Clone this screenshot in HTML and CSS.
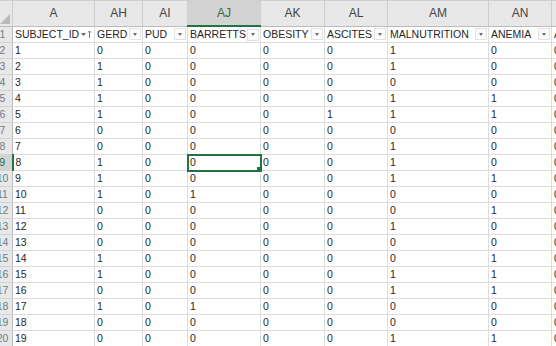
FILE: index.html
```html
<!DOCTYPE html>
<html lang="en">
<head>
    <meta charset="UTF-8">
    <meta name="viewport" content="width=device-width, initial-scale=1.0">
    <title>Sheet1</title>
    <link rel="stylesheet" href="styles.css">
</head>
<body>
    <table class="sheet">
        <colgroup>
            <col class="c-rn"><col class="c-a"><col class="c-ah"><col class="c-ai"><col class="c-aj">
            <col class="c-ak"><col class="c-al"><col class="c-am"><col class="c-an"><col class="c-ao">
        </colgroup>
        <thead>
            <tr class="letters">
                <th class="corner"><span class="tri"></span></th>
                <th>A</th><th>AH</th><th>AI</th><th class="sel">AJ</th><th>AK</th><th>AL</th><th>AM</th><th>AN</th><th>AO</th>
            </tr>
        </thead>
        <tbody>
            <tr class="fields">
                <td class="rn">1</td>
                <td><div class="fh"><span>SUBJECT_ID</span><span class="fbtn sort"><svg width="12" height="10" viewBox="0 0 12 10"><path d="M1 4h5l-2.5 3z" fill="#666"/><path d="M9.5 9V2M8 3.5l1.5-1.5 1.5 1.5" stroke="#777" stroke-width="1" fill="none"/></svg></span></div></td>
                <td><div class="fh"><span>GERD</span><span class="fbtn"></span></div></td>
                <td><div class="fh"><span>PUD</span><span class="fbtn"></span></div></td>
                <td><div class="fh"><span>BARRETTS</span><span class="fbtn"></span></div></td>
                <td><div class="fh"><span>OBESITY</span><span class="fbtn"></span></div></td>
                <td><div class="fh"><span>ASCITES</span><span class="fbtn"></span></div></td>
                <td><div class="fh"><span>MALNUTRITION</span><span class="fbtn"></span></div></td>
                <td><div class="fh"><span>ANEMIA</span><span class="fbtn"></span></div></td>
                <td><div class="fh"><span>ASTHMA</span><span class="fbtn"></span></div></td>
            </tr>
            <tr><td class="rn">2</td><td>1</td><td>0</td><td>0</td><td>0</td><td>0</td><td>0</td><td>1</td><td>0</td><td>0</td></tr>
            <tr><td class="rn">3</td><td>2</td><td>1</td><td>0</td><td>0</td><td>0</td><td>0</td><td>1</td><td>0</td><td>0</td></tr>
            <tr><td class="rn">4</td><td>3</td><td>1</td><td>0</td><td>0</td><td>0</td><td>0</td><td>0</td><td>0</td><td>0</td></tr>
            <tr><td class="rn">5</td><td>4</td><td>1</td><td>0</td><td>0</td><td>0</td><td>0</td><td>1</td><td>1</td><td>0</td></tr>
            <tr><td class="rn">6</td><td>5</td><td>1</td><td>0</td><td>0</td><td>0</td><td>1</td><td>1</td><td>1</td><td>0</td></tr>
            <tr><td class="rn">7</td><td>6</td><td>0</td><td>0</td><td>0</td><td>0</td><td>0</td><td>0</td><td>0</td><td>0</td></tr>
            <tr><td class="rn">8</td><td>7</td><td>0</td><td>0</td><td>0</td><td>0</td><td>0</td><td>1</td><td>0</td><td>0</td></tr>
            <tr><td class="rn sel">9</td><td>8</td><td>1</td><td>0</td><td class="active">0</td><td>0</td><td>0</td><td>1</td><td>0</td><td>0</td></tr>
            <tr><td class="rn">10</td><td>9</td><td>1</td><td>0</td><td>0</td><td>0</td><td>0</td><td>1</td><td>1</td><td>0</td></tr>
            <tr><td class="rn">11</td><td>10</td><td>1</td><td>0</td><td>1</td><td>0</td><td>0</td><td>0</td><td>0</td><td>0</td></tr>
            <tr><td class="rn">12</td><td>11</td><td>0</td><td>0</td><td>0</td><td>0</td><td>0</td><td>0</td><td>1</td><td>0</td></tr>
            <tr><td class="rn">13</td><td>12</td><td>0</td><td>0</td><td>0</td><td>0</td><td>0</td><td>1</td><td>0</td><td>0</td></tr>
            <tr><td class="rn">14</td><td>13</td><td>0</td><td>0</td><td>0</td><td>0</td><td>0</td><td>0</td><td>0</td><td>0</td></tr>
            <tr><td class="rn">15</td><td>14</td><td>1</td><td>0</td><td>0</td><td>0</td><td>0</td><td>0</td><td>1</td><td>0</td></tr>
            <tr><td class="rn">16</td><td>15</td><td>1</td><td>0</td><td>0</td><td>0</td><td>0</td><td>1</td><td>1</td><td>0</td></tr>
            <tr><td class="rn">17</td><td>16</td><td>0</td><td>0</td><td>0</td><td>0</td><td>0</td><td>1</td><td>1</td><td>0</td></tr>
            <tr><td class="rn">18</td><td>17</td><td>1</td><td>0</td><td>1</td><td>0</td><td>0</td><td>0</td><td>0</td><td>0</td></tr>
            <tr><td class="rn">19</td><td>18</td><td>0</td><td>0</td><td>0</td><td>0</td><td>0</td><td>0</td><td>0</td><td>0</td></tr>
            <tr><td class="rn">20</td><td>19</td><td>0</td><td>0</td><td>0</td><td>0</td><td>0</td><td>1</td><td>1</td><td>0</td></tr>
        </tbody>
    </table>
</body>
</html>
```

FILE: styles.css
```css
body {
    margin: 0;
    background: #fff;
    overflow: hidden;
    font-family: "Liberation Sans", Arial, sans-serif;
}

.sheet {
    margin-left: -8px;
    border-collapse: collapse;
    table-layout: fixed;
    width: 619px;
    font-size: 10.5px;
    color: #262626;
}

.c-rn { width: 20px; }
.c-a  { width: 82px; }
.c-ah { width: 48px; }
.c-ai { width: 45px; }
.c-aj { width: 73px; }
.c-ak { width: 64px; }
.c-al { width: 63px; }
.c-am { width: 101px; }
.c-an { width: 63px; }
.c-ao { width: 60px; }

th, td {
    border: 1px solid #dcdcdc;
    padding: 0 0 0 2px;
    white-space: nowrap;
    overflow: hidden;
    text-align: left;
}

td {
    height: 15px;
    line-height: 15px;
}

/* column letters */
.letters th {
    height: 24px;
    background: #e8e8e8;
    border-color: #d0d0d0 #cdcdcd #bcbcbc #cdcdcd;
    color: #444;
    font-weight: normal;
    font-size: 12px;
    text-align: center;
    padding: 0;
}

.letters th.sel {
    background: #d3d3d3;
    color: #2c6b43;
    border-bottom: 2px solid #217346;
}

.corner {
    position: relative;
}

.corner .tri {
    position: absolute;
    right: 2px;
    bottom: 2px;
    width: 0;
    height: 0;
    border-left: 10px solid transparent;
    border-bottom: 10px solid #b9b9b9;
}

/* row numbers */
td.rn {
    background: #e8e8e8;
    border-color: #d2d2d2 #bcbcbc;
    color: #6f7a86;
    text-align: center;
    padding: 0;
}

td.rn.sel {
    background: #d3d3d3;
    color: #217346;
    border-right: 2px solid #217346;
}

/* field names row */
.fh {
    display: flex;
    align-items: center;
    justify-content: space-between;
    padding-right: 1px;
}

.fbtn {
    flex: none;
    width: 12px;
    height: 12px;
    box-sizing: border-box;
    border: 1px solid #e2e2e2;
    background: #fbfbfb;
    display: flex;
    align-items: center;
    justify-content: center;
}

.fbtn::after {
    content: "";
    border-left: 2.5px solid transparent;
    border-right: 2.5px solid transparent;
    border-top: 3px solid #6d6d6d;
}

.fbtn.sort {
    width: 14px;
    border: none;
    background: none;
}

.fbtn.sort::after {
    content: none;
}

/* active cell */
td.active {
    position: relative;
    outline: 2px solid #217346;
    outline-offset: -1px;
}

td.active::after {
    content: "";
    position: absolute;
    right: -3px;
    bottom: -3px;
    width: 5px;
    height: 5px;
    background: #217346;
    border: 1px solid #fff;
}
```
